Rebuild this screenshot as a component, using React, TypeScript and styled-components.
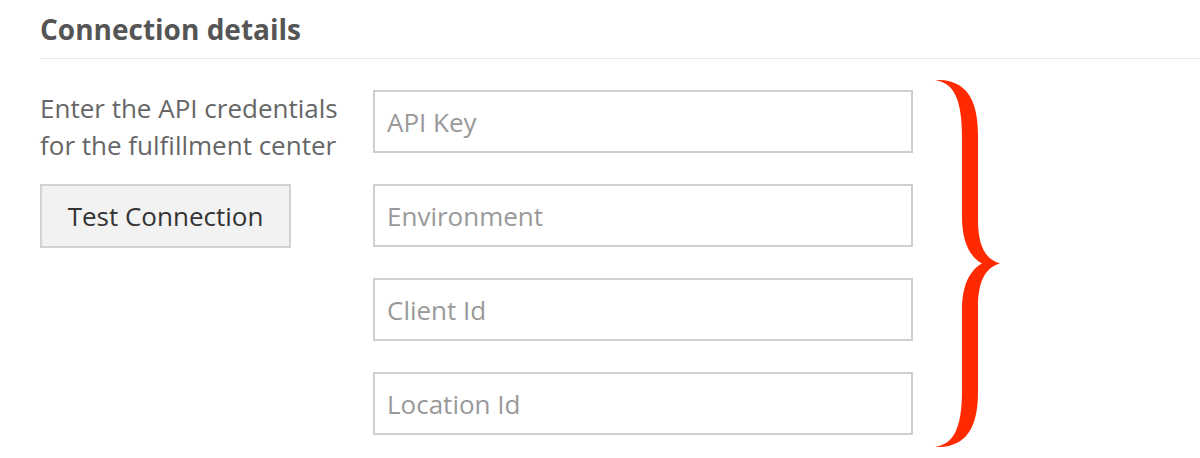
import styled, { createGlobalStyle } from 'styled-components';

const GlobalStyle = createGlobalStyle`
  body {
    margin: 0;
    background: #fff;
    font-family: 'Open Sans', 'Liberation Sans', sans-serif;
  }
`;

const fields = ['API Key', 'Environment', 'Client Id', 'Location Id'];

export default function App() {
  return (
    <>
      <GlobalStyle />
      <Section>
        <Heading>Connection details</Heading>
        <Row>
          <Intro>
            <Description>
              Enter the API credentials
              <br />
              for the fulfillment center
            </Description>
            <TestButton type="button">Test Connection</TestButton>
          </Intro>
          <Fields>
            {fields.map((f) => (
              <Input key={f} placeholder={f} />
            ))}
          </Fields>
          {/* brace runs a little past the first and last field */}
          <Brace viewBox="0 0 65 367" width="65" height="367" aria-hidden>
            <path
              fill="#ff2a00"
              d="M0,0 C28,-1 43,15 43,55 L43,140 C43,168 52,180 65,183.5 C52,187 43,199 43,227 L43,312 C43,352 28,368 0,367 C18,364 27,350 27,310 L27,230 C27,205 35,190 47,183.5 C35,177 27,162 27,137 L27,57 C27,17 18,3 0,0 Z"
            />
          </Brace>
        </Row>
      </Section>
    </>
  );
}

const Section = styled.section`
  padding-left: 40px;
`;

const Heading = styled.h2`
  margin: 0;
  padding-top: 12px;
  padding-bottom: 12px;
  font-size: 28px;
  line-height: 34px;
  font-weight: 700;
  color: #555;
  border-bottom: 1px solid #e6e6e6;
`;

const Row = styled.div`
  display: flex;
  align-items: flex-start;
  padding-top: 31px;
`;

const Intro = styled.div`
  width: 310px;
  margin-right: 23px;
`;

const Description = styled.p`
  margin: 0 0 20px;
  font-size: 26px;
  line-height: 37px;
  color: #666;
`;

const TestButton = styled.button`
  width: 251px;
  height: 64px;
  padding: 0;
  background: #f2f2f2;
  border: 2px solid #d2d2d2;
  border-radius: 0;
  font-family: inherit;
  font-size: 26px;
  color: #333;
`;

const Fields = styled.div`
  display: flex;
  flex-direction: column;
  gap: 31px;
`;

const Input = styled.input`
  box-sizing: border-box;
  width: 540px;
  height: 63px;
  padding: 0 12px;
  border: 2px solid #cfcfcf;
  border-radius: 0;
  font-family: inherit;
  font-size: 26px;
  color: #333;
  outline: none;

  &::placeholder {
    color: #999;
  }
`;

const Brace = styled.svg`
  display: block;
  flex: none;
  margin-top: -10px;
  margin-left: 22px;
`;
